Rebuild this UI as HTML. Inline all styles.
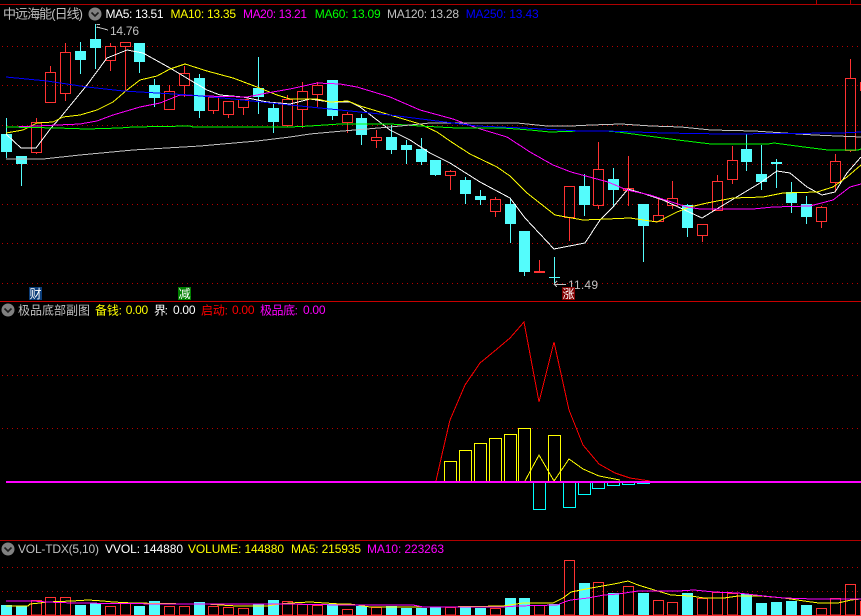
<!DOCTYPE html>
<html>
<head>
<meta charset="utf-8">
<style>
html,body{margin:0;padding:0;background:#000;width:861px;height:616px;overflow:hidden}
svg{display:block;position:absolute;left:0;top:0}
.l{fill:none;stroke-width:1}
text{font-family:"Liberation Sans","Noto Sans CJK SC",sans-serif;font-size:12px}
.c{font-family:"Liberation Sans","WenQuanYi Zen Hei","Noto Sans CJK SC",sans-serif}
</style>
</head>
<body>
<svg width="861" height="616" viewBox="0 0 861 616" xmlns="http://www.w3.org/2000/svg">
<rect width="861" height="616" fill="#000"/>
<g shape-rendering="crispEdges">
<!-- grid -->
<path class="l" stroke="#b80000" stroke-dasharray="1 4" d="M2 46.5H861M2 85.5H861M2 125.5H861M2 164.5H861M2 204.5H861M2 243.5H861M2 283.5H861M2 375.5H861M2 428.5H861M2 567.5H861M2 591.5H861"/>
<!-- separators -->
<path class="l" stroke="#b00000" d="M0 4.5H861M816.5 0V4M850.5 0V4M0 540.5H861"/>
<path class="l" stroke="#c80000" d="M0 301.5H861"/>
<!-- candles cyan -->
<path class="l" stroke="#54fcfc" d="M6.5 118V158M21.5 156V186M80.5 42V74M95.5 24V69M139.5 43V73M154.5 79V107M199.5 74V118M258.5 57V114M273.5 104V133M332.5 80V120M361.5 114V145M391.5 125V154M406.5 140V164M421.5 138V165M435.5 160V176M465.5 177V204M480.5 190V205M510.5 199V243M524.5 231V276M554.5 257V285M584.5 174V216M613.5 168V206M643.5 204V262M687.5 204V237M746.5 134V171M761.5 145V190M776.5 159V188M791.5 182V213M806.5 196V224"/>
<path fill="#54fcfc" d="M1 134h11v18h-11zM16 156h11v8h-11zM75 51h11v9h-11zM90 39h11v9h-11zM134 43h11v19h-11zM149 85h11v13h-11zM194 78h11v33h-11zM253 88h11v9h-11zM268 108h11v14h-11zM327 80h11v36h-11zM356 118h11v17h-11zM386 137h11v13h-11zM401 145h11v5h-11zM416 149h11v13h-11zM430 160h11v15h-11zM460 180h11v14h-11zM475 196h11v4h-11zM505 204h11v20h-11zM519 231h11v41h-11zM549 277h11v1h-11zM579 186h11v19h-11zM608 179h11v11h-11zM638 204h11v22h-11zM682 205h11v23h-11zM741 149h11v13h-11zM756 174h11v8h-11zM771 162h11v2h-11zM786 192h11v11h-11zM801 204h11v13h-11z"/>
<!-- candles red -->
<path class="l" stroke="#ff3232" d="M31.5 122.5h10v30h-10zM36.5 118V122M36.5 153V154M45.5 72.5h10v30h-10zM50.5 66V72M60.5 52.5h10v41h-10zM65.5 43V52M65.5 94V101M105.5 46.5h10v14h-10zM110.5 43V46M110.5 61V71M120.5 42.5h10v4h-10zM125.5 47V91M164.5 91.5h10v18h-10zM169.5 85V91M179.5 73.5h10v12h-10zM184.5 66V73M184.5 86V97M208.5 97.5h10v13h-10zM213.5 111V114M223.5 101.5h10v13h-10zM228.5 115V118M238.5 99.5h10v8h-10zM243.5 108V115M282.5 99.5h10v26h-10zM287.5 95V99M287.5 126V127M297.5 91.5h10v18h-10zM302.5 82V91M302.5 110V128M312.5 85.5h10v9h-10zM317.5 82V85M317.5 95V107M342.5 114.5h10v8h-10zM347.5 112V114M347.5 123V133M371.5 137.5h10v3h-10zM376.5 130V137M376.5 141V148M445.5 171.5h10v4h-10zM450.5 170V171M450.5 176V190M490.5 199.5h10v12h-10zM495.5 197V199M495.5 212V217M534.5 271.5h10v1h-10zM539.5 260V271M564.5 186.5h10v31h-10zM569.5 218V241M593.5 169.5h10v36h-10zM598.5 142V169M598.5 206V209M623.5 188.5h10v2h-10zM628.5 156V188M628.5 191V206M653.5 215.5h10v6h-10zM658.5 198V215M667.5 198.5h10v7h-10zM672.5 181V198M672.5 206V209M697.5 224.5h10v11h-10zM702.5 236V242M712.5 181.5h10v29h-10zM717.5 175V181M727.5 160.5h10v19h-10zM732.5 146V160M732.5 180V184M816.5 207.5h10v14h-10zM821.5 206V207M821.5 222V228M830.5 161.5h10v21h-10zM835.5 154V161M835.5 183V192M845.5 78.5h10v72h-10zM850.5 59V78M850.5 151V152M860.5 82.5h10v8h-10z"/>
<!-- MA lines -->
<polyline class="l" stroke="#ffffff" points="6,134 21,148 36,148 51,128 60,118 87,85 107,58 127,50 143,53 170,68 190,80 207,90 220,95 243,97 267,102 290,104 310,99 330,102 350,102 360,107 377,120 390,130 410,140 430,153 450,163 480,182 510,198 525,218 554,249 585,243 600,220 613,207 628,189 645,194 663,200 702,218 720,207 740,195 760,183 777,171 790,173 807,187 822,195 835,192 847,173 861,157"/>
<polyline class="l" stroke="#ffff00" points="6,133 23,130 37,123 53,122 63,117 80,115 97,110 113,102 127,90 140,80 157,76 170,69 185,64 207,71 233,78 257,87 277,95 290,99 317,99 330,102 348,101 360,106 390,115 420,124 437,132 453,143 470,154 497,167 510,176 527,193 555,215 583,220 630,218 657,222 677,212 690,207 707,203 733,198 763,197 783,193 817,192 833,187 847,177 861,165"/>
<polyline class="l" stroke="#ff00ff" points="13,127 80,124 97,121 113,115 140,107 160,103 180,95 203,96 247,97 267,93 290,89 317,83 340,84 357,87 390,97 420,110 453,119 477,128 507,137 530,152 553,165 571,172 608,182 627,190 650,195 687,207 700,209 753,209 773,207 810,206 833,200 850,187 861,184"/>
<polyline class="l" stroke="#00ff00" points="6,127 57,128 87,129 120,128 133,127 190,126 193,127 290,127 310,126 340,124 390,124 420,126 457,128 503,128 530,130 550,132 580,131 606,131 618,132 648,136 678,140 711,144 768,144 774,143 804,147 828,150 858,150 861,149"/>
<polyline class="l" stroke="#c0c0c0" points="6,159 43,159 80,155 133,150 200,146 257,141 290,137 310,134 343,131 390,127 430,123 517,123 547,126 571,126 591,125 621,124 651,126 681,127 711,130 754,131 784,133 814,135 861,137"/>
<polyline class="l" stroke="#0000ff" points="6,77 47,81 87,87 123,91 157,93 190,95 233,99 290,105 310,107 340,110 390,115 437,121 477,126 523,128 580,131 606,131 664,133 724,134 841,133 861,132"/>
<!-- markers -->
<path class="l" stroke="#c0c0c0" d="M96.5 24.5H100M96.5 27.5H99M97 27L108 30M554 284.5H566M554 284L557 281M554 284L557 287"/>
<!-- indicator panel -->
<path class="l" stroke="#ffff00" d="M444.5 482V461.5h12V482M459.5 482V450.5h12V482M474.5 482V443.5h12V482M489.5 482V438.5h12V482M504.5 482V434.5h12V482M518.5 482V428.5h12V482M548.5 482V435.5h12V482"/>
<path class="l" stroke="#00ffff" d="M533.5 482V509.5h12V482M563.5 482V507.5h12V482M578.5 482V494.5h12V482M592.5 482V488.5h12V482M607.5 482V485.5h12V482M622.5 482V484.5h12V482M637.5 482V483.5h12V482"/>
<polyline class="l" stroke="#ffff00" points="525,481 539,455 554,481 569,459 583,469 599,476 620,480"/>
<polyline class="l" stroke="#ff0000" points="436,481 443,450 450,420 465,385 480,363 497,349 510,338 524,322 539,402 554,342 569,410 583,445 599,464 615,473 630,478 650,481"/>
<rect x="6" y="481" width="855" height="2" fill="#ff00ff"/>
<!-- volume panel -->
<path fill="#54fcfc" d="M1 605h11V615h-11zM16 606h11V615h-11zM75 605h11V615h-11zM90 603h11V615h-11zM134 606h11V615h-11zM149 601h11V615h-11zM194 602h11V615h-11zM253 604h11V615h-11zM268 600h11V615h-11zM327 604h11V615h-11zM356 606h11V615h-11zM386 606h11V615h-11zM401 608h11V615h-11zM416 608h11V615h-11zM430 607h11V615h-11zM460 606h11V615h-11zM475 608h11V615h-11zM505 598h11V615h-11zM519 598h11V615h-11zM549 604h11V615h-11zM579 583h11V615h-11zM608 593h11V615h-11zM638 593h11V615h-11zM682 593h11V615h-11zM741 594h11V615h-11zM756 603h11V615h-11zM771 602h11V615h-11zM786 601h11V615h-11zM801 605h11V615h-11z"/>
<path class="l" stroke="#ff3232" d="M31.5 600.5h10V615h-10zM45.5 597.5h10V615h-10zM60.5 597.5h10V615h-10zM105.5 606.5h10V615h-10zM120.5 603.5h10V615h-10zM164.5 606.5h10V615h-10zM179.5 606.5h10V615h-10zM208.5 606.5h10V615h-10zM223.5 607.5h10V615h-10zM238.5 608.5h10V615h-10zM282.5 601.5h10V615h-10zM297.5 604.5h10V615h-10zM312.5 605.5h10V615h-10zM342.5 609.5h10V615h-10zM371.5 607.5h10V615h-10zM445.5 607.5h10V615h-10zM490.5 608.5h10V615h-10zM534.5 605.5h10V615h-10zM564.5 560.5h10V615h-10zM593.5 582.5h10V615h-10zM623.5 586.5h10V615h-10zM653.5 600.5h10V615h-10zM667.5 602.5h10V615h-10zM697.5 598.5h10V615h-10zM712.5 592.5h10V615h-10zM727.5 593.5h10V615h-10zM816.5 608.5h10V615h-10zM830.5 598.5h10V615h-10zM845.5 584.5h10V615h-10zM860.5 601.5h10V615h-10z"/>
<polyline class="l" stroke="#ffff00" points="6,606 28,606 30,604 40,603 47,602 72,601 88,600 103,601 113,602 133,603 190,604 207,604 220,605 237,606 267,606 280,604 290,603 310,602 340,604 350,604 370,607 443,607 503,606 523,603 553,603 563,598 571,592 591,588 614,584 628,581 638,585 651,589 671,595 691,596 704,598 724,598 738,596 761,596 784,598 804,601 819,603 838,603 851,600 861,599"/>
<polyline class="l" stroke="#ff00ff" points="6,601 33,601 47,602 73,603 167,604 290,604 340,605 413,605 423,607 503,607 517,606 557,605 567,601 571,600 588,598 604,595 618,594 638,591 664,591 678,591 694,590 714,592 738,593 764,596 784,598 814,599 861,599"/>
<rect x="0" y="615" width="861" height="1" fill="#ff3232"/>
</g>
<!-- header icons -->
<circle cx="95" cy="14" r="6.5" fill="#808080"/><path d="M91.5 12.5L95 16L98.5 12.5" fill="none" stroke="#1c1c1c" stroke-width="1.6"/>
<circle cx="8" cy="310" r="6.5" fill="#808080"/><path d="M4.5 308.5L8 312L11.5 308.5" fill="none" stroke="#1c1c1c" stroke-width="1.6"/>
<circle cx="8" cy="549" r="6.5" fill="#808080"/><path d="M4.5 547.5L8 551L11.5 547.5" fill="none" stroke="#1c1c1c" stroke-width="1.6"/>
<!-- header main -->
<text class="c" x="3" y="18.5" fill="#c0c0c0" style="font-size:13px" textLength="80" lengthAdjust="spacing">中远海能(日线)</text>
<text x="105.5" y="18" fill="#ffffff" textLength="58" lengthAdjust="spacing">MA5: 13.51</text>
<text x="170.5" y="18" fill="#ffff00" textLength="65.5" lengthAdjust="spacing">MA10: 13.35</text>
<text x="243" y="18" fill="#ff00ff" textLength="64" lengthAdjust="spacing">MA20: 13.21</text>
<text x="314.7" y="18" fill="#00ff00" textLength="66" lengthAdjust="spacing">MA60: 13.09</text>
<text x="387" y="18" fill="#c0c0c0" textLength="72" lengthAdjust="spacing">MA120: 13.28</text>
<text x="465.7" y="18" fill="#0000ff" textLength="73" lengthAdjust="spacing">MA250: 13.43</text>
<text x="110" y="35" fill="#c0c0c0" textLength="29" lengthAdjust="spacing">14.76</text>
<text x="568" y="289" fill="#c0c0c0" textLength="30" lengthAdjust="spacing">11.49</text>
<!-- badges -->
<g shape-rendering="crispEdges">
<rect x="29" y="287" width="13" height="13" fill="#0a3c78"/>
<rect x="178" y="287" width="13" height="13" fill="#008000"/>
<rect x="562" y="287" width="13" height="13" fill="#800000"/>
</g>
<text class="c" x="35.5" y="298" fill="#fff" text-anchor="middle">财</text>
<text class="c" x="184.5" y="298" fill="#fff" text-anchor="middle">减</text>
<text class="c" x="568.5" y="298" fill="#fff" text-anchor="middle">涨</text>
<!-- indicator header -->
<text class="c" x="18" y="314.5" fill="#c0c0c0" textLength="72" lengthAdjust="spacing">极品底部副图</text>
<text class="c" x="95" y="314.5" fill="#ffff00" textLength="27" lengthAdjust="spacing">备钱:</text>
<text x="125.7" y="314" fill="#ffff00" textLength="22.5" lengthAdjust="spacing">0.00</text>
<text class="c" x="154" y="314.5" fill="#ffffff" textLength="14" lengthAdjust="spacing">界:</text>
<text x="173" y="314" fill="#ffffff" textLength="22.5" lengthAdjust="spacing">0.00</text>
<text class="c" x="201" y="314.5" fill="#ff0000" textLength="27" lengthAdjust="spacing">启动:</text>
<text x="232" y="314" fill="#ff0000" textLength="22.5" lengthAdjust="spacing">0.00</text>
<text class="c" x="260" y="314.5" fill="#ff00ff" textLength="38" lengthAdjust="spacing">极品底:</text>
<text x="303" y="314" fill="#ff00ff" textLength="22.5" lengthAdjust="spacing">0.00</text>
<!-- volume header -->
<text x="18" y="553" fill="#c0c0c0" textLength="81" lengthAdjust="spacing">VOL-TDX(5,10)</text>
<text x="105" y="553" fill="#ffffff" textLength="78" lengthAdjust="spacing">VVOL: 144880</text>
<text x="188" y="553" fill="#ffff00" textLength="96" lengthAdjust="spacing">VOLUME: 144880</text>
<text x="291" y="553" fill="#ffff00" textLength="70" lengthAdjust="spacing">MA5: 215935</text>
<text x="367" y="553" fill="#ff00ff" textLength="77" lengthAdjust="spacing">MA10: 223263</text>
</svg>
</body>
</html>
